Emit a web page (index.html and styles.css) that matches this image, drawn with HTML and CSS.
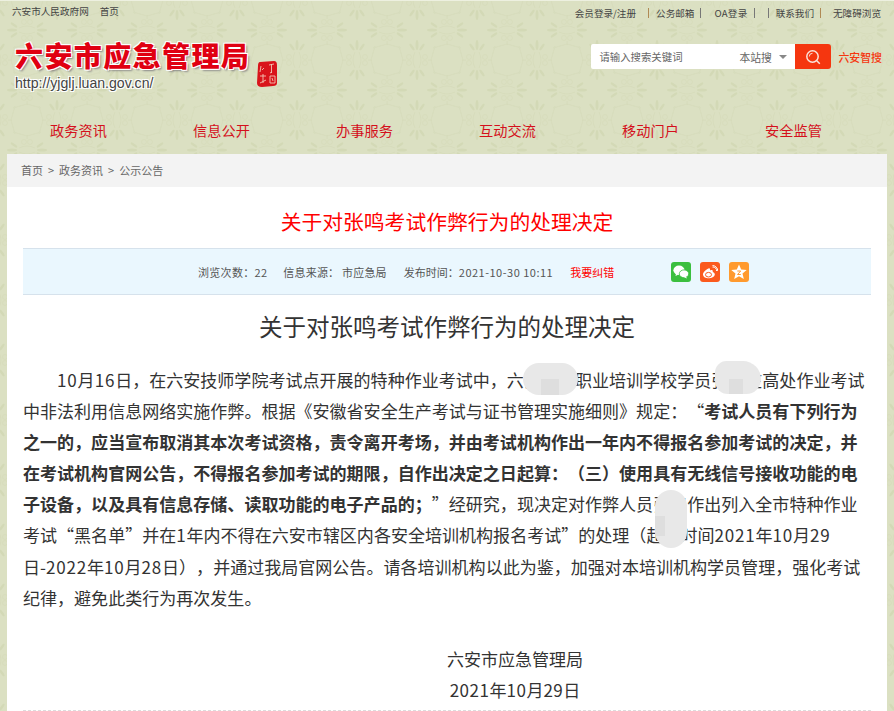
FILE: index.html
```html
<!DOCTYPE html>
<html lang="zh-CN">
<head>
  <meta charset="UTF-8" />
  <meta name="viewport" content="width=device-width, initial-scale=1.0" />
  <title>关于对张鸣考试作弊行为的处理决定</title>
  <link rel="stylesheet" href="styles.css">
</head>
<body>
  <div class="topbar">
    <div class="topbar-left">
      <a href="#">六安市人民政府网</a>
      <a href="#">首页</a>
    </div>
    <div class="topbar-right">
      <a href="#">会员登录/注册</a>
      <i class="sep sep-tan sep-first"></i>
      <a href="#">公务邮箱</a>
      <i class="sep"></i>
      <a href="#" class="oa">OA登录</a>
      <i class="sep"></i>
      <i class="sep sep-wide"></i>
      <a href="#">联系我们</a>
      <i class="sep sep-tan"></i>
      <a href="#" class="last">无障碍浏览</a>
    </div>
  </div>

  <header class="head">
    <div class="logo">
      <div class="logo-text">
        <div class="logo-name">六安市应急管理局</div>
        <div class="logo-url">http://yjglj.luan.gov.cn/</div>
      </div>
      <svg class="seal" width="20" height="26" viewBox="0 0 20 26">
        <path d="M3 1 L17 0 Q20 0 20 4 L20 22 Q20 25 16 25 L5 26 Q0 26 0 22 L1 5 Q1 1 3 1 Z" fill="#d9141b"/>
        <path d="M12 4 L17 3 M14.500 3 L14.500 12 M13 12 L15 11 M4 5 L3 11 M7 7 L5 9 M3 15 L9 15 M6 13 L6 22 M3 22 L9 19 M13 15 L18 15 L18 22 L13 22 Z M15 17 L16 20" stroke="#f3c4b4" stroke-width="0.900" fill="none"/>
      </svg>
    </div>
    <div class="search">
      <div class="search-box">
        <span class="search-hint">请输入搜索关键词</span>
        <span class="search-scope">本站搜</span>
        <i class="caret"></i>
      </div>
      <button class="search-btn" type="button" aria-label="搜索">
        <svg width="16" height="16" viewBox="0 0 16 16">
          <circle cx="7.500" cy="7.500" r="5.700" stroke="#fbe3da" stroke-width="1.500" fill="none"/>
          <path d="M11.800 11.800 L14.800 14.800" stroke="#fbe3da" stroke-width="1.500"/>
          <path d="M4.300 7.500 A3.200 3.200 0 0 1 7.500 4.300" stroke="#fbe3da" stroke-width="1" fill="none"/>
        </svg>
      </button>
      <a href="#" class="search-zhi">六安智搜</a>
    </div>
  </header>

  <nav class="nav">
    <a href="#">政务资讯</a>
    <a href="#">信息公开</a>
    <a href="#">办事服务</a>
    <a href="#">互动交流</a>
    <a href="#">移动门户</a>
    <a href="#">安全监管</a>
  </nav>

  <main class="wrap">
    <div class="crumb">
      <a href="#">首页</a><span class="gt">&gt;</span><a href="#">政务资讯</a><span class="gt">&gt;</span><a href="#">公示公告</a>
    </div>
    <div class="content">
      <h1 class="title-red">关于对张鸣考试作弊行为的处理决定</h1>
      <div class="meta">
        <span class="meta-views">浏览次数：22</span>
        <span class="meta-from">信息来源： 市应急局</span>
        <span class="meta-time">发布时间：<span class="meta-date">2021-10-30 10:11</span></span>
        <a href="#" class="meta-fix">我要纠错</a>
        <div class="share">
          <a href="#" class="share-btn share-wx">
            <svg width="16" height="14" viewBox="0 0 16 14">
              <ellipse cx="6" cy="5.200" rx="5.600" ry="4.700" fill="#fff"/>
              <path d="M3 8.500 L2.500 11 L5.500 9.500 Z" fill="#fff"/>
              <ellipse cx="11" cy="8.800" rx="4.700" ry="3.900" stroke="#3bbf3f" stroke-width="0.800" fill="#fff"/>
              <path d="M13 11.500 L14 13.500 L11 12.300 Z" fill="#fff"/>
            </svg>
          </a>
          <a href="#" class="share-btn share-wb">
            <svg width="16" height="14" viewBox="0 0 16 14">
              <path d="M6.500 3.500 C3.500 5 0.800 7.500 1 9.800 C1.300 12.500 4.500 13.500 7.500 13.300 C10.800 13 13 11 12.800 9 C12.600 7.600 11 7.400 10.700 7 C11.200 5.500 10.500 4.500 8 5.400 C8.300 3.800 7.800 3 6.500 3.500 Z" fill="#fff"/>
              <ellipse cx="6.500" cy="9.700" rx="3" ry="2.300" stroke="#fb5a1d" stroke-width="1" fill="none"/>
              <path d="M10.500 2 A3.500 3.500 0 0 1 14.500 6 M10.500 0.500 A5.500 5.500 0 0 1 15.800 6" stroke="#fff" stroke-width="1" fill="none"/>
            </svg>
          </a>
          <a href="#" class="share-btn share-fav">
            <svg width="16" height="16" viewBox="0 0 16 16">
              <path d="M8 0.500 L10.200 5.500 L15.700 6 L11.500 9.600 L12.800 15 L8 12.200 L3.200 15 L4.500 9.600 L0.300 6 L5.800 5.500 Z" fill="#fff"/>
              <path d="M6.300 7 L9.700 7 L6.500 10.500 L9.800 10.500" stroke="#ff9a2e" stroke-width="1" fill="none"/>
            </svg>
          </a>
        </div>
      </div>
      <h2 class="title-dark">关于对张鸣考试作弊行为的处理决定</h2>
      <div class="article">
        <p class="indent"><span class="num">10</span>月<span class="num">16</span>日，在六安技师学院考试点开展的特种作业考试中，六<span class="mask mask-a">安某某</span>职业培训学校学员<span class="mask mask-b">张</span>鸣在高处作业考试中非法利用信息网络实施作弊。根据《安徽省安全生产考试与证书管理实施细则》规定：“<b>考试人员有下列行为之一的，应当宣布取消其本次考试资格，责令离开考场，并由考试机构作出一年内不得报名参加考试的决定，并在考试机构官网公告，不得报名参加考试的期限，自作出决定之日起算：（三）使用具有无线信号接收功能的电子设备，以及具有信息存储、读取功能的电子产品的；</b>”经研究，现决定对作弊人员<span class="mask mask-c">张</span>鸣作出列入全市特种作业考试“黑名单”并在<span class="num">1</span>年内不得在六安市辖区内各安全培训机构报名考试”的处理（起止时间<span class="num">2021</span>年<span class="num">10</span>月<span class="num">29</span>日-<span class="num">2022</span>年<span class="num">10</span>月<span class="num">28</span>日），并通过我局官网公告。请各培训机构以此为鉴，加强对本培训机构学员管理，强化考试纪律，避免此类行为再次发生。</p>
        <p class="sign">六安市应急管理局</p>
        <p class="sign"><span class="num-sign">2021</span>年<span class="num-sign">10</span>月<span class="num-sign">29</span>日</p>
      </div>
    </div>
  </main>
</body>
</html>
```

FILE: styles.css
```css
* {
  box-sizing: border-box;
}
html {
  overflow: hidden;
}
body {
  margin: 0;
  height: 711px;
  overflow: hidden;
  font-family: "Noto Sans CJK SC", "Liberation Sans", sans-serif;
  text-spacing-trim: space-all;
  color: #333;
  background-color: #dbe0c2;
  background-image: url("data:image/svg+xml,%3Csvg xmlns='http://www.w3.org/2000/svg' xmlns:xlink='http://www.w3.org/1999/xlink' width='60' height='60' viewBox='0 0 60 60'%3E%3Cdefs%3E%3Cg id='m' fill='none' stroke='%23d5dbba' stroke-width='.8'%3E%3Cg fill='%23d3d9b6' stroke='none'%3E%3Cellipse cx='-15' cy='0' rx='5' ry='1.500'/%3E%3Cellipse cx='15' cy='0' rx='5' ry='1.500'/%3E%3Cellipse cx='-13' cy='-5' rx='4' ry='1.300' transform='rotate(35 -13 -5)'/%3E%3Cellipse cx='13' cy='-5' rx='4' ry='1.300' transform='rotate(-35 13 -5)'/%3E%3Cellipse cx='-13' cy='5' rx='4' ry='1.300' transform='rotate(-35 -13 5)'/%3E%3Cellipse cx='13' cy='5' rx='4' ry='1.300' transform='rotate(35 13 5)'/%3E%3C/g%3E%3Ccircle cx='-3' cy='-8' r='2.500'/%3E%3Ccircle cx='3' cy='-8' r='2.500'/%3E%3Ccircle cx='-3' cy='8' r='2.500'/%3E%3Ccircle cx='3' cy='8' r='2.500'/%3E%3Cpath d='M-8 -2 Q0 -6 8 -2 M-8 2 Q0 6 8 2 M0 -14 L-14 -18 M0 -14 L14 -18 M0 14 L-14 18 M0 14 L14 18 M0 -11 L0 -15 M0 11 L0 15'/%3E%3C/g%3E%3C/defs%3E%3Cuse xlink:href='%23m' x='27' y='30'/%3E%3Cg transform='translate(57 0) rotate(90)'%3E%3Cuse xlink:href='%23m'/%3E%3C/g%3E%3Cg transform='translate(-3 0) rotate(90)'%3E%3Cuse xlink:href='%23m'/%3E%3C/g%3E%3Cg transform='translate(57 60) rotate(90)'%3E%3Cuse xlink:href='%23m'/%3E%3C/g%3E%3Cg transform='translate(-3 60) rotate(90)'%3E%3Cuse xlink:href='%23m'/%3E%3C/g%3E%3C/svg%3E");
}
a {
  color: inherit;
  text-decoration: none;
}

/* top links */
.topbar {
  display: flex;
  justify-content: space-between;
  height: 22px;
  padding: 3px 13px 0 12px;
  font-size: 9.600px;
  line-height: 15px;
  color: #444;
  border-top: 1px solid #edf0e0;
}
.topbar-left {
  display: flex;
  gap: 11px;
}
.topbar-right {
  display: flex;
  align-items: center;
}
.sep {
  width: 1px;
  height: 10px;
  margin: 0 7px 0 6px;
  background: #777;
}
.sep-tan {
  background: #b08a55;
}
.sep-first {
  margin-left: 12px;
}
.oa {
  margin-left: 6px;
  letter-spacing: 0.300px;
}
.last {
  margin-left: 5px;
}

/* logo and search */
.head {
  display: flex;
  justify-content: space-between;
  height: 86px;
  padding: 14px 12px 0 15px;
}
.logo {
  display: flex;
  align-items: flex-start;
}
.logo-name {
  width: 240px;
  font-size: 28px;
  line-height: 38px;
  font-weight: 900;
  letter-spacing: 1.400px;
  white-space: nowrap;
  color: #e00012;
  text-shadow: 1px 1px 0 #fff, -1px -1px 0 #fff, 1px -1px 0 #fff, -1px 1px 0 #fff, 2px 2px 2px #888;
}
.logo-url {
  font-family: "Liberation Sans", sans-serif;
  font-size: 14.100px;
  line-height: 15px;
  margin-top: 2px;
  color: #444;
  text-shadow: 1px 1px 0 #fff, -1px -1px 0 #fff, 1px -1px 0 #fff, -1px 1px 0 #fff;
}
.seal {
  margin: 25px 0 0 2px;
}
.search {
  display: flex;
  align-items: center;
  height: 25px;
  margin-top: 8px;
}
.search-box {
  display: flex;
  align-items: center;
  width: 204px;
  height: 25px;
  padding-left: 8px;
  background: #fff;
  border-radius: 2px 0 0 2px;
  font-size: 10.400px;
  color: #666;
}
.search-hint {
  width: 140px;
}
.search-scope {
  width: 40px;
  font-size: 10.800px;
}
.caret {
  width: 0;
  height: 0;
  border-left: 4px solid transparent;
  border-right: 4px solid transparent;
  border-top: 4px solid #888;
}
.search-btn {
  display: flex;
  align-items: center;
  justify-content: center;
  width: 36px;
  height: 25px;
  padding: 0;
  border: none;
  border-radius: 0 3px 3px 0;
  background: #f5360f;
}
.search-zhi {
  margin-left: 7px;
  font-size: 10.900px;
  font-weight: 500;
  color: #f5360f;
}

/* main nav */
.nav {
  display: flex;
  height: 46px;
  padding: 9px 0 0 7px;
}
.nav a {
  width: 143px;
  font-size: 14.200px;
  line-height: 26px;
  text-align: center;
  color: #d4101c;
}

/* page body */
.wrap {
  width: 880px;
  height: 557px;
  margin-left: 7px;
  background: #fff;
}
.crumb {
  display: flex;
  align-items: center;
  height: 33px;
  padding: 0 0 2px 14px;
  background: #f3f3f3;
  font-size: 11px;
  color: #666;
}
.gt {
  margin: 0 5px;
}
.content {
  padding: 0 16px;
}
.title-red {
  margin: 0;
  padding-top: 19px;
  height: 61px;
  font-size: 20.800px;
  line-height: 30px;
  font-weight: 400;
  text-align: center;
  color: #f00;
}
.meta {
  display: flex;
  align-items: center;
  height: 47px;
  padding-left: 175px;
  background: #eaf7fe;
  border-top: 1px solid #d6e2ec;
  border-bottom: 1px solid #d6e2ec;
  font-size: 11px;
  color: #555;
}
.meta-views {
  letter-spacing: 0.300px;
}
.meta-from {
  margin-left: 16px;
  letter-spacing: 0.200px;
}
.meta-time {
  margin-left: 17px;
}
.meta-date {
  letter-spacing: 0.500px;
}
.meta-fix {
  margin-left: 17px;
  color: #f00;
}
.share {
  display: flex;
  gap: 9px;
  margin-left: 57px;
}
.share-btn {
  display: flex;
  align-items: center;
  justify-content: center;
  width: 20px;
  height: 20px;
  border-radius: 3px;
}
.share-wx {
  background: #3bbf3f;
}
.share-wb {
  background: #fb5a1d;
}
.share-fav {
  background: #ff9a2e;
}
.title-dark {
  margin: 0;
  padding-top: 14px;
  height: 69px;
  font-size: 23.500px;
  line-height: 34px;
  font-weight: 400;
  text-align: center;
  color: #333;
}
.article {
  height: 347px;
  border-bottom: 1px dashed #ddd;
  font-size: 17.050px;
  line-height: 31.100px;
  color: #333;
}
.article p {
  margin: 0;
}
.indent {
  text-indent: 2em;
  padding: 0 6px 30px 0;
}
.num {
  letter-spacing: 0.800px;
}
.num-sign {
  letter-spacing: 0.500px;
}
.article .sign {
  padding-left: 136px;
  text-align: center;
}
.article b {
  font-weight: 700;
}

/* redacted names */
.mask {
  position: relative;
}
.mask::after {
  content: "";
  position: absolute;
  background-color: #e8e8e8;
  background-image: linear-gradient(#dedede, #dedede);
  background-repeat: no-repeat;
}
.mask-a::after {
  left: -1px;
  top: -4px;
  width: 55px;
  height: 32px;
  border-radius: 16px;
  background-size: 18px 16px;
  background-position: 18px 16px;
}
.mask-b::after {
  left: 4px;
  top: -6px;
  width: 46px;
  height: 33px;
  border-radius: 14px 22px 18px 16px;
  background-size: 14px 15px;
  background-position: 14px 18px;
}
.mask-c::after {
  left: 2px;
  top: -1px;
  width: 32px;
  height: 58px;
  border-radius: 16px;
  background-size: 10px 20px;
  background-position: 0 26px;
}
```
